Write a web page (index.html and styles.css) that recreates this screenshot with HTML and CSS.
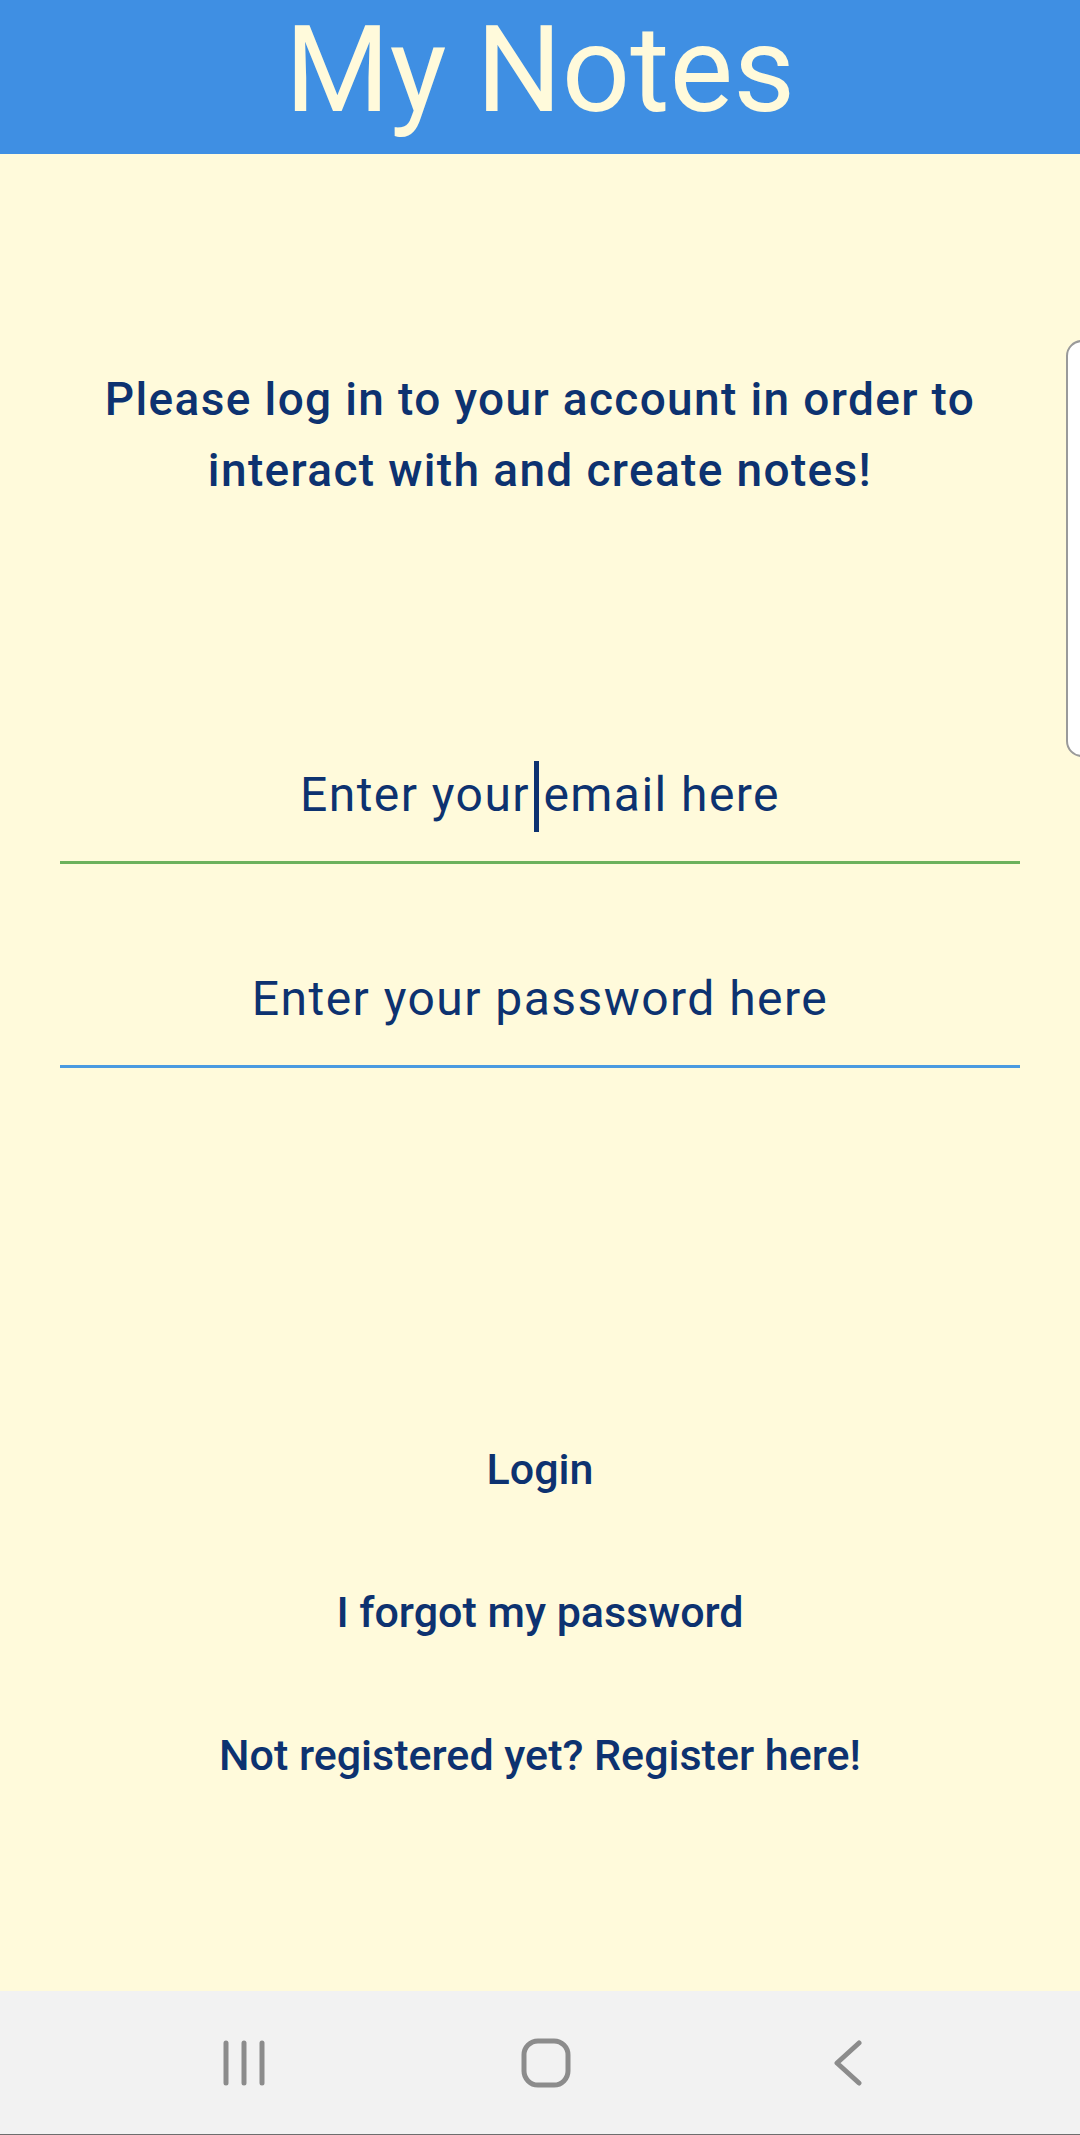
FILE: index.html
```html
<!DOCTYPE html>
<html lang="en">
<head>
<meta charset="utf-8">
<title>My Notes</title>
<link rel="stylesheet" href="styles.css">
</head>
<body>
<div class="app">
  <header class="appbar">
    <h1 class="title">My Notes</h1>
  </header>
  <main class="content">
    <p class="prompt">Please log in to your account in order to<br>interact with and create notes!</p>
    <div class="field field-email">
      <span class="hint">Enter your <span class="caret-anchor"><span class="caret"></span></span>email here</span>
    </div>
    <div class="field field-password">
      <span class="hint">Enter your password here</span>
    </div>
    <div class="actions">
      <button class="text-btn btn-login">Login</button>
      <button class="text-btn">I forgot my password</button>
      <button class="text-btn">Not registered yet? Register here!</button>
    </div>
    <div class="edge-handle"></div>
  </main>
  <nav class="navbar">
    <div class="nav-slot">
      <svg width="42" height="46" viewBox="0 0 42 46" class="nav-icon">
        <line x1="3" y1="3" x2="3" y2="43"/>
        <line x1="21" y1="3" x2="21" y2="43"/>
        <line x1="39" y1="3" x2="39" y2="43"/>
      </svg>
    </div>
    <div class="nav-slot">
      <svg width="50" height="50" viewBox="0 0 50 50" class="nav-icon">
        <rect x="3" y="3" width="44" height="44" rx="14" ry="14"/>
      </svg>
    </div>
    <div class="nav-slot">
      <svg width="30" height="46" viewBox="0 0 30 46" class="nav-icon">
        <polyline points="26,3 4,23 26,43"/>
      </svg>
    </div>
  </nav>
</div>
</body>
</html>
```

FILE: styles.css
```css
html, body {
  margin: 0;
  padding: 0;
}

body {
  width: 1080px;
  height: 2135px;
  background: #fffadb;
  font-family: Roboto, "Noto Sans", "Liberation Sans", sans-serif;
  overflow: hidden;
}

.app {
  display: flex;
  flex-direction: column;
  height: 2135px;
}

.appbar {
  height: 154px;
  flex: 0 0 154px;
  background: #3f8fe3;
  display: flex;
  justify-content: center;
  align-items: flex-start;
}

.title {
  margin: 0;
  font-size: 120px;
  font-weight: 400;
  line-height: normal;
  color: #fffadb;
}

.content {
  flex: 1 1 auto;
  position: relative;
  display: flex;
  flex-direction: column;
  align-items: stretch;
}

.prompt {
  margin: 210px 0 0;
  text-align: center;
  font-size: 46px;
  font-weight: 500;
  line-height: 71px;
  letter-spacing: 1.35px;
  color: #0d3270;
}

.field {
  margin: 0 60px;
  padding-bottom: 38px;
  text-align: center;
  font-size: 48px;
  line-height: 56px;
  letter-spacing: 1.45px;
  color: #0d3270;
}

.field-email {
  margin-top: 261px;
  border-bottom: 3px solid #6cb15c;
}

.field-password {
  margin-top: 107px;
  border-bottom: 3px solid #4a9ae0;
}

.caret-anchor {
  position: relative;
  display: inline-block;
  width: 0;
}

.caret {
  position: absolute;
  left: -9px;
  top: -50px;
  width: 5px;
  height: 71px;
  background: #0d3270;
}

.actions {
  margin-top: 375px;
  display: flex;
  flex-direction: column;
  align-items: center;
  gap: 91px;
}

.text-btn {
  border: 0;
  background: transparent;
  padding: 0;
  margin: 0;
  font-family: Roboto, "Noto Sans", "Liberation Sans", sans-serif;
  font-size: 43px;
  font-weight: 500;
  line-height: 52px;
  color: #0d3270;
}

.edge-handle {
  position: absolute;
  left: 1066px;
  top: 186px;
  width: 30px;
  height: 413px;
  background: #ffffff;
  border: 2px solid #9a9a9a;
  border-radius: 16px;
}

.navbar {
  flex: 0 0 143px;
  height: 143px;
  background: #f2f2f2;
  border-bottom: 1px solid #6e6e6e;
  display: grid;
  grid-template-columns: repeat(3, 302px);
  justify-content: center;
  padding-left: 12px;
}

.nav-slot {
  display: flex;
  justify-content: center;
  align-items: center;
}

.nav-icon {
  fill: none;
  stroke: #8c8c8c;
  stroke-width: 5;
  stroke-linecap: round;
  stroke-linejoin: round;
}
```
